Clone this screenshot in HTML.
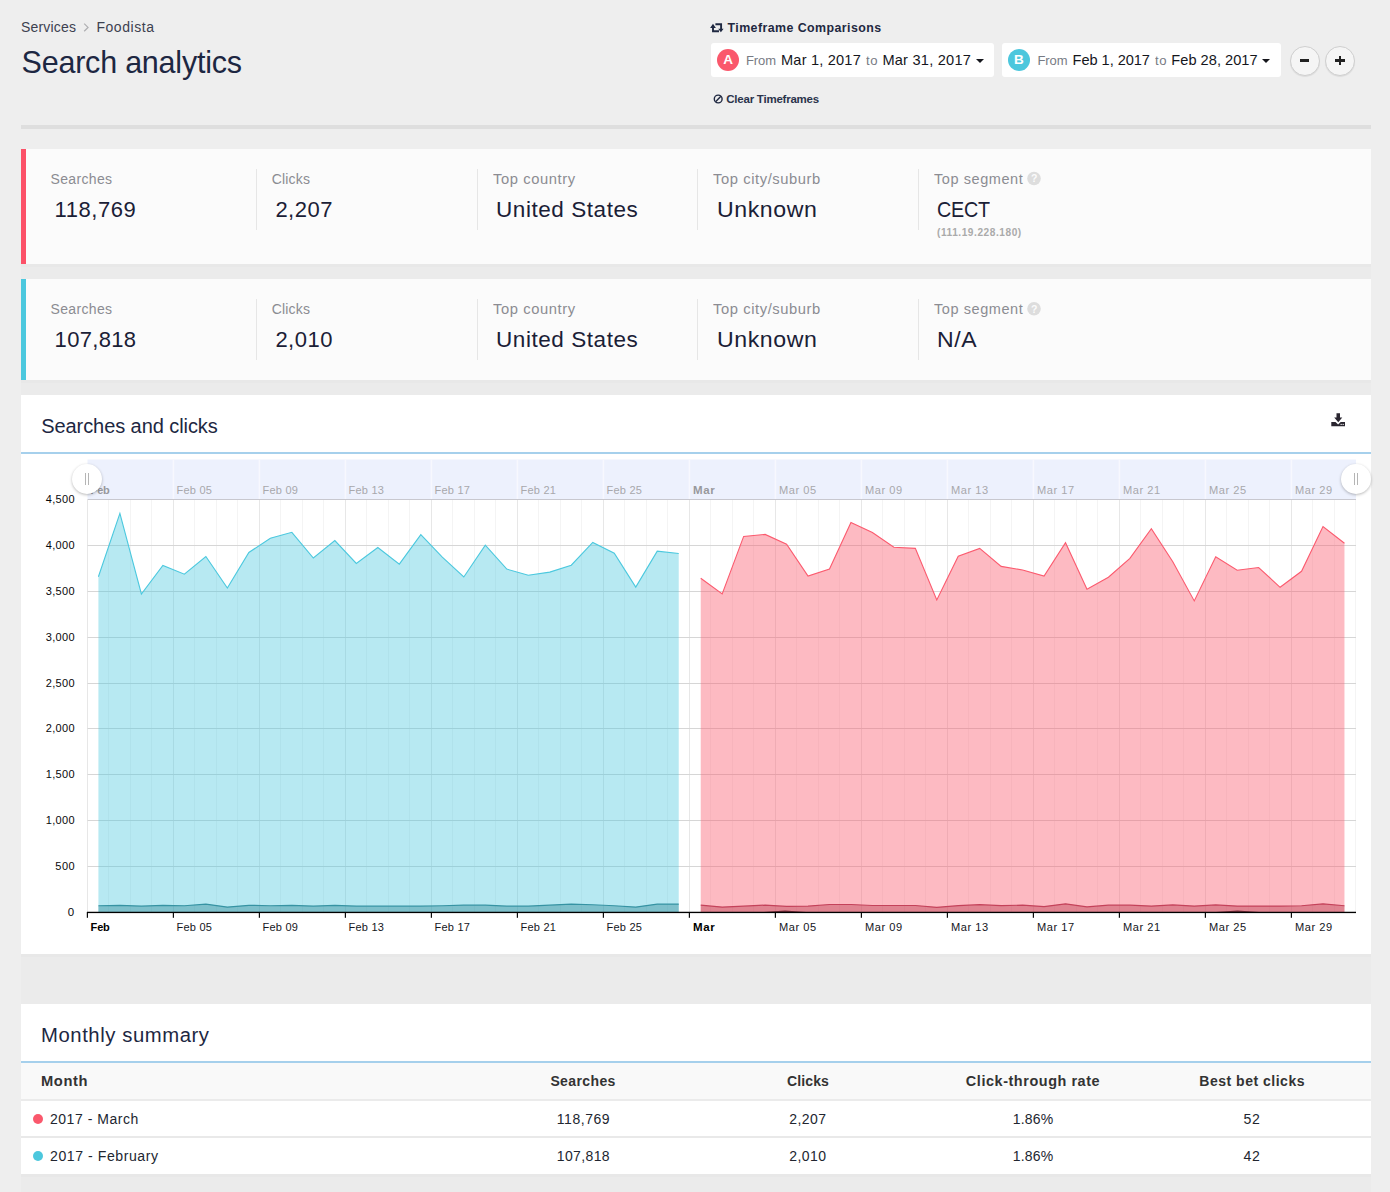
<!DOCTYPE html>
<html><head><meta charset="utf-8"><title>Search analytics</title>
<style>
html,body{margin:0;padding:0}
body{width:1390px;height:1192px;position:relative;overflow:hidden;background:#eeeeee;font-family:"Liberation Sans", sans-serif;}
.t{position:absolute;white-space:nowrap;line-height:1;}
.b{position:absolute;}
.card{position:absolute;background:#fff;}
</style></head>
<body>

<div class="b" style="left:21px;top:125px;width:1350px;height:4px;background:#dedede"></div>
<!-- timeframe buttons -->
<div class="b" style="left:711px;top:43px;width:283px;height:33.5px;background:#fff;border-radius:3px"></div>
<div class="b" style="left:1002px;top:43px;width:278.5px;height:33.5px;background:#fff;border-radius:3px"></div>
<div class="b" style="left:717px;top:49.2px;width:22px;height:22px;border-radius:50%;background:#fa586c"></div>
<div class="b" style="left:1007.8px;top:49px;width:22px;height:22px;border-radius:50%;background:#4cc7dd"></div>
<div class="b" style="left:975.6px;top:58.6px;width:0;height:0;border-left:4.2px solid transparent;border-right:4.2px solid transparent;border-top:4.4px solid #15161c"></div>
<div class="b" style="left:1262px;top:58.6px;width:0;height:0;border-left:4.2px solid transparent;border-right:4.2px solid transparent;border-top:4.4px solid #15161c"></div>
<div class="b" style="left:1289.5px;top:45.5px;width:28px;height:28px;border-radius:50%;background:#f5f5f5;border:1px solid #cfcfcf;box-shadow:0 1px 1px rgba(0,0,0,.08)"></div>
<div class="b" style="left:1325px;top:45.5px;width:28px;height:28px;border-radius:50%;background:#f5f5f5;border:1px solid #cfcfcf;box-shadow:0 1px 1px rgba(0,0,0,.08)"></div>
<div class="b" style="left:1300px;top:59.3px;width:9px;height:2.4px;background:#222"></div>
<div class="b" style="left:1335.4px;top:59.3px;width:9.4px;height:2.4px;background:#222"></div>
<div class="b" style="left:1338.9px;top:55.8px;width:2.4px;height:9.4px;background:#222"></div>
<!-- stat cards -->
<div class="b" style="left:21px;top:149px;width:1350px;height:1043px;background:rgba(0,0,0,0.012)"></div>
<div class="card" style="left:21px;top:149px;width:1350px;height:115px;background:#fbfbfb;box-shadow:0 3px 0 #e8e8e8"></div>
<div class="b" style="left:21px;top:149px;width:5px;height:115px;background:#fc5168"></div>
<div class="card" style="left:21px;top:279px;width:1350px;height:101px;background:#fbfbfb;box-shadow:0 3px 0 #e8e8e8"></div>
<div class="b" style="left:21px;top:279px;width:5px;height:101px;background:#4bc8de"></div>
<div class="b" style="left:256.0px;top:169px;width:1px;height:61px;background:#e6e6e6"></div>
<div class="b" style="left:477.0px;top:169px;width:1px;height:61px;background:#e6e6e6"></div>
<div class="b" style="left:697.0px;top:169px;width:1px;height:61px;background:#e6e6e6"></div>
<div class="b" style="left:918.0px;top:169px;width:1px;height:61px;background:#e6e6e6"></div>
<div class="b" style="left:256.0px;top:299px;width:1px;height:61px;background:#e6e6e6"></div>
<div class="b" style="left:477.0px;top:299px;width:1px;height:61px;background:#e6e6e6"></div>
<div class="b" style="left:697.0px;top:299px;width:1px;height:61px;background:#e6e6e6"></div>
<div class="b" style="left:918.0px;top:299px;width:1px;height:61px;background:#e6e6e6"></div>

<!-- chart card -->
<div class="card" style="left:21px;top:395px;width:1350px;height:559px;box-shadow:0 3px 0 #e8e8e8"></div>
<div class="b" style="left:21px;top:452px;width:1350px;height:2px;background:#a6d0ec"></div>
<!-- summary card -->
<div class="card" style="left:21px;top:1004px;width:1350px;height:170px;box-shadow:0 3px 0 #e8e8e8"></div>
<div class="b" style="left:21px;top:1061px;width:1350px;height:2px;background:#a6d0ec"></div>
<div class="b" style="left:21px;top:1063px;width:1350px;height:36.5px;background:#f9f9f9"></div>
<div class="b" style="left:21px;top:1099.2px;width:1350px;height:1.8px;background:#ebebeb"></div>
<div class="b" style="left:21px;top:1136.4px;width:1350px;height:1.8px;background:#e9e9e9"></div>
<div class="b" style="left:33.1px;top:1114.1px;width:10px;height:10px;border-radius:50%;background:#fa586c"></div>
<div class="b" style="left:33.1px;top:1151px;width:10px;height:10px;border-radius:50%;background:#4cc7dd"></div>


<svg class="b" style="left:0;top:0" width="1390" height="1192" viewBox="0 0 1390 1192">
<!-- breadcrumb chevron -->
<path d="M84.2,23.6 L88,27.4 L84.2,31.2" fill="none" stroke="#b0b0b3" stroke-width="1.3"/>
<!-- retweet icon -->
<g fill="none" stroke="#1f2841" stroke-width="1.9">
<path d="M713,27.3 V31.2 H719"/><path d="M715.4,24.3 H721.1 V29.2"/>
</g>
<path d="M710.1,27.9 h5.8 l-2.9,-4.2z M718.2,28.7 h5.4 l-2.7,3.6z" fill="#1f2841"/>
<!-- ban icon -->
<circle cx="718.2" cy="99" r="3.9" fill="none" stroke="#1f2841" stroke-width="1.4"/>
<path d="M715.6,101.8 L720.9,96.2" stroke="#1f2841" stroke-width="1.4"/>
<!-- question icons -->
<circle cx="1034" cy="178.5" r="6.8" fill="#dddddd"/>
<circle cx="1034" cy="308.7" r="6.8" fill="#dddddd"/>
<!-- download icon -->
<path d="M1336.5,413.2 h3.5 v4.3 h2.3 l-4.05,4.7 l-4.05,-4.7 h2.3z" fill="#2a2630"/>
<path d="M1331.3,421.9 h4.2 l2.6,2.5 l2.6,-2.5 h4.3 v4.3 h-13.7z" fill="#2a2630"/>
<rect x="1340.6" y="423.9" width="1.1" height="1.1" fill="#fff"/><rect x="1342.6" y="423.9" width="1.1" height="1.1" fill="#fff"/>
<rect x="87.5" y="459.5" width="1268.5" height="39.5" fill="#edf1fd"/>
<rect x="172.6" y="459.5" width="1.6" height="39.5" fill="#f7f8fe"/>
<rect x="258.6" y="459.5" width="1.6" height="39.5" fill="#f7f8fe"/>
<rect x="344.6" y="459.5" width="1.6" height="39.5" fill="#f7f8fe"/>
<rect x="430.6" y="459.5" width="1.6" height="39.5" fill="#f7f8fe"/>
<rect x="516.6" y="459.5" width="1.6" height="39.5" fill="#f7f8fe"/>
<rect x="602.6" y="459.5" width="1.6" height="39.5" fill="#f7f8fe"/>
<rect x="688.6" y="459.5" width="1.6" height="39.5" fill="#f7f8fe"/>
<rect x="774.6" y="459.5" width="1.6" height="39.5" fill="#f7f8fe"/>
<rect x="860.6" y="459.5" width="1.6" height="39.5" fill="#f7f8fe"/>
<rect x="946.6" y="459.5" width="1.6" height="39.5" fill="#f7f8fe"/>
<rect x="1032.6" y="459.5" width="1.6" height="39.5" fill="#f7f8fe"/>
<rect x="1118.6" y="459.5" width="1.6" height="39.5" fill="#f7f8fe"/>
<rect x="1204.6" y="459.5" width="1.6" height="39.5" fill="#f7f8fe"/>
<rect x="1290.6" y="459.5" width="1.6" height="39.5" fill="#f7f8fe"/>
<line x1="87.5" y1="500" x2="87.5" y2="912" stroke="#e7e7e7" stroke-width="1"/>
<line x1="108.5" y1="500" x2="108.5" y2="912" stroke="#f4f4f4" stroke-width="1"/>
<line x1="130.5" y1="500" x2="130.5" y2="912" stroke="#f4f4f4" stroke-width="1"/>
<line x1="151.5" y1="500" x2="151.5" y2="912" stroke="#f4f4f4" stroke-width="1"/>
<line x1="173.5" y1="500" x2="173.5" y2="912" stroke="#e7e7e7" stroke-width="1"/>
<line x1="194.5" y1="500" x2="194.5" y2="912" stroke="#f4f4f4" stroke-width="1"/>
<line x1="216.5" y1="500" x2="216.5" y2="912" stroke="#f4f4f4" stroke-width="1"/>
<line x1="237.5" y1="500" x2="237.5" y2="912" stroke="#f4f4f4" stroke-width="1"/>
<line x1="259.5" y1="500" x2="259.5" y2="912" stroke="#e7e7e7" stroke-width="1"/>
<line x1="280.5" y1="500" x2="280.5" y2="912" stroke="#f4f4f4" stroke-width="1"/>
<line x1="302.5" y1="500" x2="302.5" y2="912" stroke="#f4f4f4" stroke-width="1"/>
<line x1="323.5" y1="500" x2="323.5" y2="912" stroke="#f4f4f4" stroke-width="1"/>
<line x1="345.5" y1="500" x2="345.5" y2="912" stroke="#e7e7e7" stroke-width="1"/>
<line x1="366.5" y1="500" x2="366.5" y2="912" stroke="#f4f4f4" stroke-width="1"/>
<line x1="388.5" y1="500" x2="388.5" y2="912" stroke="#f4f4f4" stroke-width="1"/>
<line x1="409.5" y1="500" x2="409.5" y2="912" stroke="#f4f4f4" stroke-width="1"/>
<line x1="431.5" y1="500" x2="431.5" y2="912" stroke="#e7e7e7" stroke-width="1"/>
<line x1="452.5" y1="500" x2="452.5" y2="912" stroke="#f4f4f4" stroke-width="1"/>
<line x1="474.5" y1="500" x2="474.5" y2="912" stroke="#f4f4f4" stroke-width="1"/>
<line x1="495.5" y1="500" x2="495.5" y2="912" stroke="#f4f4f4" stroke-width="1"/>
<line x1="517.5" y1="500" x2="517.5" y2="912" stroke="#e7e7e7" stroke-width="1"/>
<line x1="538.5" y1="500" x2="538.5" y2="912" stroke="#f4f4f4" stroke-width="1"/>
<line x1="560.5" y1="500" x2="560.5" y2="912" stroke="#f4f4f4" stroke-width="1"/>
<line x1="581.5" y1="500" x2="581.5" y2="912" stroke="#f4f4f4" stroke-width="1"/>
<line x1="603.5" y1="500" x2="603.5" y2="912" stroke="#e7e7e7" stroke-width="1"/>
<line x1="624.5" y1="500" x2="624.5" y2="912" stroke="#f4f4f4" stroke-width="1"/>
<line x1="646.5" y1="500" x2="646.5" y2="912" stroke="#f4f4f4" stroke-width="1"/>
<line x1="667.5" y1="500" x2="667.5" y2="912" stroke="#f4f4f4" stroke-width="1"/>
<line x1="689.5" y1="500" x2="689.5" y2="912" stroke="#e7e7e7" stroke-width="1"/>
<line x1="710.5" y1="500" x2="710.5" y2="912" stroke="#f4f4f4" stroke-width="1"/>
<line x1="732.5" y1="500" x2="732.5" y2="912" stroke="#f4f4f4" stroke-width="1"/>
<line x1="753.5" y1="500" x2="753.5" y2="912" stroke="#f4f4f4" stroke-width="1"/>
<line x1="775.5" y1="500" x2="775.5" y2="912" stroke="#e7e7e7" stroke-width="1"/>
<line x1="796.5" y1="500" x2="796.5" y2="912" stroke="#f4f4f4" stroke-width="1"/>
<line x1="818.5" y1="500" x2="818.5" y2="912" stroke="#f4f4f4" stroke-width="1"/>
<line x1="839.5" y1="500" x2="839.5" y2="912" stroke="#f4f4f4" stroke-width="1"/>
<line x1="861.5" y1="500" x2="861.5" y2="912" stroke="#e7e7e7" stroke-width="1"/>
<line x1="882.5" y1="500" x2="882.5" y2="912" stroke="#f4f4f4" stroke-width="1"/>
<line x1="904.5" y1="500" x2="904.5" y2="912" stroke="#f4f4f4" stroke-width="1"/>
<line x1="925.5" y1="500" x2="925.5" y2="912" stroke="#f4f4f4" stroke-width="1"/>
<line x1="947.5" y1="500" x2="947.5" y2="912" stroke="#e7e7e7" stroke-width="1"/>
<line x1="968.5" y1="500" x2="968.5" y2="912" stroke="#f4f4f4" stroke-width="1"/>
<line x1="990.5" y1="500" x2="990.5" y2="912" stroke="#f4f4f4" stroke-width="1"/>
<line x1="1011.5" y1="500" x2="1011.5" y2="912" stroke="#f4f4f4" stroke-width="1"/>
<line x1="1033.5" y1="500" x2="1033.5" y2="912" stroke="#e7e7e7" stroke-width="1"/>
<line x1="1054.5" y1="500" x2="1054.5" y2="912" stroke="#f4f4f4" stroke-width="1"/>
<line x1="1076.5" y1="500" x2="1076.5" y2="912" stroke="#f4f4f4" stroke-width="1"/>
<line x1="1097.5" y1="500" x2="1097.5" y2="912" stroke="#f4f4f4" stroke-width="1"/>
<line x1="1119.5" y1="500" x2="1119.5" y2="912" stroke="#e7e7e7" stroke-width="1"/>
<line x1="1140.5" y1="500" x2="1140.5" y2="912" stroke="#f4f4f4" stroke-width="1"/>
<line x1="1162.5" y1="500" x2="1162.5" y2="912" stroke="#f4f4f4" stroke-width="1"/>
<line x1="1183.5" y1="500" x2="1183.5" y2="912" stroke="#f4f4f4" stroke-width="1"/>
<line x1="1205.5" y1="500" x2="1205.5" y2="912" stroke="#e7e7e7" stroke-width="1"/>
<line x1="1226.5" y1="500" x2="1226.5" y2="912" stroke="#f4f4f4" stroke-width="1"/>
<line x1="1248.5" y1="500" x2="1248.5" y2="912" stroke="#f4f4f4" stroke-width="1"/>
<line x1="1269.5" y1="500" x2="1269.5" y2="912" stroke="#f4f4f4" stroke-width="1"/>
<line x1="1291.5" y1="500" x2="1291.5" y2="912" stroke="#e7e7e7" stroke-width="1"/>
<line x1="1312.5" y1="500" x2="1312.5" y2="912" stroke="#f4f4f4" stroke-width="1"/>
<line x1="1334.5" y1="500" x2="1334.5" y2="912" stroke="#f4f4f4" stroke-width="1"/>
<line x1="1355.5" y1="500" x2="1355.5" y2="912" stroke="#f4f4f4" stroke-width="1"/>
<line x1="87.5" y1="866.50" x2="1356" y2="866.50" stroke="#d6d6d6" stroke-width="1"/>
<line x1="87.5" y1="820.50" x2="1356" y2="820.50" stroke="#d6d6d6" stroke-width="1"/>
<line x1="87.5" y1="774.50" x2="1356" y2="774.50" stroke="#d6d6d6" stroke-width="1"/>
<line x1="87.5" y1="728.50" x2="1356" y2="728.50" stroke="#d6d6d6" stroke-width="1"/>
<line x1="87.5" y1="683.50" x2="1356" y2="683.50" stroke="#d6d6d6" stroke-width="1"/>
<line x1="87.5" y1="637.50" x2="1356" y2="637.50" stroke="#d6d6d6" stroke-width="1"/>
<line x1="87.5" y1="591.50" x2="1356" y2="591.50" stroke="#d6d6d6" stroke-width="1"/>
<line x1="87.5" y1="545.50" x2="1356" y2="545.50" stroke="#d6d6d6" stroke-width="1"/>
<line x1="87.5" y1="499.50" x2="1356" y2="499.50" stroke="#c8c8cf" stroke-width="1"/>
<path d="M98.40,912.10 L98.40,576.70 L119.89,513.40 L141.39,594.00 L162.88,565.40 L184.38,574.20 L205.87,556.50 L227.36,588.00 L248.86,552.50 L270.35,538.30 L291.85,532.30 L313.34,558.00 L334.83,540.60 L356.33,563.40 L377.82,547.50 L399.32,564.10 L420.81,534.60 L442.30,557.20 L463.80,577.00 L485.29,545.20 L506.79,569.10 L528.28,575.30 L549.77,572.10 L571.27,565.20 L592.76,542.40 L614.26,553.20 L635.75,587.10 L657.24,551.20 L678.74,553.50 L678.74,912.10 Z" fill="#4bc8de" fill-opacity="0.4"/>
<path d="M98.40,576.70 L119.89,513.40 L141.39,594.00 L162.88,565.40 L184.38,574.20 L205.87,556.50 L227.36,588.00 L248.86,552.50 L270.35,538.30 L291.85,532.30 L313.34,558.00 L334.83,540.60 L356.33,563.40 L377.82,547.50 L399.32,564.10 L420.81,534.60 L442.30,557.20 L463.80,577.00 L485.29,545.20 L506.79,569.10 L528.28,575.30 L549.77,572.10 L571.27,565.20 L592.76,542.40 L614.26,553.20 L635.75,587.10 L657.24,551.20 L678.74,553.50" fill="none" stroke="#4bc8de" stroke-width="1.1"/>
<path d="M700.75,912.10 L700.75,578.30 L722.21,594.00 L743.66,536.40 L765.12,534.40 L786.58,544.30 L808.03,576.00 L829.49,569.10 L850.95,522.60 L872.41,532.50 L893.86,547.30 L915.32,548.40 L936.78,600.00 L958.23,556.20 L979.69,548.40 L1001.15,566.40 L1022.61,570.00 L1044.06,576.00 L1065.52,542.70 L1086.98,589.20 L1108.43,577.20 L1129.89,558.30 L1151.35,528.80 L1172.80,561.80 L1194.26,600.90 L1215.72,556.70 L1237.18,570.30 L1258.63,567.50 L1280.09,587.30 L1301.55,571.30 L1323.00,526.50 L1344.46,543.30 L1344.46,912.10 Z" fill="#fb5a6e" fill-opacity="0.42"/>
<path d="M700.75,578.30 L722.21,594.00 L743.66,536.40 L765.12,534.40 L786.58,544.30 L808.03,576.00 L829.49,569.10 L850.95,522.60 L872.41,532.50 L893.86,547.30 L915.32,548.40 L936.78,600.00 L958.23,556.20 L979.69,548.40 L1001.15,566.40 L1022.61,570.00 L1044.06,576.00 L1065.52,542.70 L1086.98,589.20 L1108.43,577.20 L1129.89,558.30 L1151.35,528.80 L1172.80,561.80 L1194.26,600.90 L1215.72,556.70 L1237.18,570.30 L1258.63,567.50 L1280.09,587.30 L1301.55,571.30 L1323.00,526.50 L1344.46,543.30" fill="none" stroke="#fb5a6e" stroke-width="1.1"/>
<path d="M98.40,912.10 L98.40,905.77 L119.89,905.32 L141.39,906.14 L162.88,905.32 L184.38,905.77 L205.87,904.12 L227.36,907.06 L248.86,905.32 L270.35,905.77 L291.85,905.32 L313.34,906.14 L334.83,905.32 L356.33,906.14 L377.82,906.14 L399.32,906.14 L420.81,906.14 L442.30,905.77 L463.80,905.13 L485.29,905.13 L506.79,906.14 L528.28,906.14 L549.77,905.13 L571.27,904.12 L592.76,904.77 L614.26,905.77 L635.75,907.06 L657.24,904.12 L678.74,904.12 L678.74,912.10 Z" fill="#2f8796" fill-opacity="0.42"/>
<path d="M98.40,905.77 L119.89,905.32 L141.39,906.14 L162.88,905.32 L184.38,905.77 L205.87,904.12 L227.36,907.06 L248.86,905.32 L270.35,905.77 L291.85,905.32 L313.34,906.14 L334.83,905.32 L356.33,906.14 L377.82,906.14 L399.32,906.14 L420.81,906.14 L442.30,905.77 L463.80,905.13 L485.29,905.13 L506.79,906.14 L528.28,906.14 L549.77,905.13 L571.27,904.12 L592.76,904.77 L614.26,905.77 L635.75,907.06 L657.24,904.12 L678.74,904.12" fill="none" stroke="#3693a3" stroke-width="1.2"/>
<path d="M700.75,912.10 L700.75,905.13 L722.21,907.06 L743.66,906.14 L765.12,905.13 L786.58,906.42 L808.03,906.14 L829.49,904.49 L850.95,904.49 L872.41,905.50 L893.86,905.50 L915.32,905.50 L936.78,907.33 L958.23,905.68 L979.69,904.68 L1001.15,905.68 L1022.61,905.13 L1044.06,906.60 L1065.52,903.85 L1086.98,906.88 L1108.43,905.13 L1129.89,905.13 L1151.35,906.05 L1172.80,904.95 L1194.26,906.05 L1215.72,904.95 L1237.18,906.05 L1258.63,906.05 L1280.09,906.05 L1301.55,905.77 L1323.00,903.85 L1344.46,905.77 L1344.46,912.10 Z" fill="#b8394e" fill-opacity="0.42"/>
<path d="M700.75,905.13 L722.21,907.06 L743.66,906.14 L765.12,905.13 L786.58,906.42 L808.03,906.14 L829.49,904.49 L850.95,904.49 L872.41,905.50 L893.86,905.50 L915.32,905.50 L936.78,907.33 L958.23,905.68 L979.69,904.68 L1001.15,905.68 L1022.61,905.13 L1044.06,906.60 L1065.52,903.85 L1086.98,906.88 L1108.43,905.13 L1129.89,905.13 L1151.35,906.05 L1172.80,904.95 L1194.26,906.05 L1215.72,904.95 L1237.18,906.05 L1258.63,906.05 L1280.09,906.05 L1301.55,905.77 L1323.00,903.85 L1344.46,905.77" fill="none" stroke="#c4425a" stroke-width="1.2"/>
<path d="M764,912 L785,910.6 L806,912 Z M1216,912 L1237.5,910.6 L1259,912 Z" fill="#5a1522" fill-opacity="0.8"/>
<rect x="87" y="911.75" width="1269" height="1.35" fill="#000"/>
<rect x="86.80" y="912" width="1.15" height="5.8" fill="#000"/>
<rect x="172.80" y="912" width="1.15" height="5.8" fill="#000"/>
<rect x="258.80" y="912" width="1.15" height="5.8" fill="#000"/>
<rect x="344.80" y="912" width="1.15" height="5.8" fill="#000"/>
<rect x="430.80" y="912" width="1.15" height="5.8" fill="#000"/>
<rect x="516.80" y="912" width="1.15" height="5.8" fill="#000"/>
<rect x="602.80" y="912" width="1.15" height="5.8" fill="#000"/>
<rect x="688.80" y="912" width="1.15" height="5.8" fill="#000"/>
<rect x="774.80" y="912" width="1.15" height="5.8" fill="#000"/>
<rect x="860.80" y="912" width="1.15" height="5.8" fill="#000"/>
<rect x="946.80" y="912" width="1.15" height="5.8" fill="#000"/>
<rect x="1032.80" y="912" width="1.15" height="5.8" fill="#000"/>
<rect x="1118.80" y="912" width="1.15" height="5.8" fill="#000"/>
<rect x="1204.80" y="912" width="1.15" height="5.8" fill="#000"/>
<rect x="1290.80" y="912" width="1.15" height="5.8" fill="#000"/>
</svg>
<span class="t" style="left:1030.9px;top:173.3px;font-size:10.5px;font-weight:700;color:#fbfbfb">?</span>
<span class="t" style="left:1030.9px;top:303.5px;font-size:10.5px;font-weight:700;color:#fbfbfb">?</span>
<!-- brush handles -->
<div class="b" style="left:72px;top:464px;width:30px;height:30px;border-radius:50%;background:#fff;box-shadow:0 1px 3px rgba(0,0,0,.28);z-index:5"></div>
<div class="b" style="left:84.7px;top:473px;width:1px;height:11.5px;background:#b5b5b5;z-index:6"></div>
<div class="b" style="left:88.3px;top:473px;width:1px;height:11.5px;background:#b5b5b5;z-index:6"></div>
<div class="b" style="left:1341px;top:464px;width:30px;height:30px;border-radius:50%;background:#fff;box-shadow:0 1px 3px rgba(0,0,0,.28);z-index:5"></div>
<div class="b" style="left:1353.7px;top:473px;width:1px;height:11.5px;background:#b5b5b5;z-index:6"></div>
<div class="b" style="left:1357.3px;top:473px;width:1px;height:11.5px;background:#b5b5b5;z-index:6"></div>

<span class="t" id="t0" style="top:20.05px;font-size:14px;color:#3d4150;letter-spacing:0.216px;left:20.90px;">Services</span>
<span class="t" id="t1" style="top:20.05px;font-size:14px;color:#3d4150;letter-spacing:0.550px;left:96.40px;">Foodista</span>
<span class="t" id="t2" style="top:46.88px;font-size:30.5px;color:#1d2742;letter-spacing:-0.225px;left:21.60px;">Search analytics</span>
<span class="t" id="t3" style="top:21.50px;font-size:12.4px;color:#1f2841;font-weight:700;letter-spacing:0.426px;left:727.50px;">Timeframe Comparisons</span>
<span class="t" id="t4" style="top:53.47px;font-size:13.5px;color:#ffffff;font-weight:700;left:528.00px;width:400px;text-align:center;">A</span>
<span class="t" id="t5" style="top:54.00px;font-size:13px;color:#777b84;letter-spacing:-0.115px;left:746.00px;">From</span>
<span class="t" id="t6" style="top:52.64px;font-size:14.6px;color:#15161c;letter-spacing:0.191px;left:781.00px;">Mar 1, 2017</span>
<span class="t" id="t7" style="top:54.00px;font-size:13px;color:#777b84;letter-spacing:0.550px;left:865.80px;transform:scaleX(1.0093);transform-origin:0 50%;">to</span>
<span class="t" id="t8" style="top:52.64px;font-size:14.6px;color:#15161c;letter-spacing:0.227px;left:882.40px;">Mar 31, 2017</span>
<span class="t" id="t9" style="top:53.37px;font-size:13.5px;color:#ffffff;font-weight:700;left:818.90px;width:400px;text-align:center;">B</span>
<span class="t" id="t10" style="top:54.00px;font-size:13px;color:#777b84;letter-spacing:-0.115px;left:1037.50px;">From</span>
<span class="t" id="t11" style="top:52.64px;font-size:14.6px;color:#15161c;letter-spacing:-0.051px;left:1072.60px;">Feb 1, 2017</span>
<span class="t" id="t12" style="top:54.00px;font-size:13px;color:#777b84;letter-spacing:0.550px;left:1155.20px;transform:scaleX(1.0093);transform-origin:0 50%;">to</span>
<span class="t" id="t13" style="top:52.64px;font-size:14.6px;color:#15161c;letter-spacing:0.026px;left:1171.30px;">Feb 28, 2017</span>
<span class="t" id="t14" style="top:93.77px;font-size:11.5px;color:#2a334b;font-weight:700;letter-spacing:-0.234px;left:726.30px;">Clear Timeframes</span>
<span class="t" id="t15" style="top:172.00px;font-size:14px;color:#8b8c92;letter-spacing:0.321px;left:50.60px;">Searches</span>
<span class="t" id="t16" style="top:198.98px;font-size:22px;color:#1a2036;letter-spacing:0.550px;left:54.60px;">118,769</span>
<span class="t" id="t17" style="top:172.00px;font-size:14px;color:#8b8c92;letter-spacing:0.191px;left:271.70px;">Clicks</span>
<span class="t" id="t18" style="top:198.98px;font-size:22px;color:#1a2036;letter-spacing:0.484px;left:275.40px;">2,207</span>
<span class="t" id="t19" style="top:172.00px;font-size:14px;color:#8b8c92;letter-spacing:0.550px;left:492.50px;transform:scaleX(1.0530);transform-origin:0 50%;">Top country</span>
<span class="t" id="t20" style="top:198.98px;font-size:22px;color:#1a2036;letter-spacing:0.550px;left:496.20px;transform:scaleX(1.0225);transform-origin:0 50%;">United States</span>
<span class="t" id="t21" style="top:172.00px;font-size:14px;color:#8b8c92;letter-spacing:0.550px;left:713.30px;transform:scaleX(1.0533);transform-origin:0 50%;">Top city/suburb</span>
<span class="t" id="t22" style="top:198.98px;font-size:22px;color:#1a2036;letter-spacing:0.550px;left:717.00px;transform:scaleX(1.0503);transform-origin:0 50%;">Unknown</span>
<span class="t" id="t23" style="top:172.00px;font-size:14px;color:#8b8c92;letter-spacing:0.550px;left:934.10px;transform:scaleX(1.0365);transform-origin:0 50%;">Top segment</span>
<span class="t" id="t24" style="top:198.98px;font-size:22px;color:#1a2036;letter-spacing:-0.250px;left:937.20px;transform:scaleX(0.8979);transform-origin:0 50%;">CECT</span>
<span class="t" id="t25" style="top:227.84px;font-size:10px;color:#aaaaaa;font-weight:700;letter-spacing:0.550px;left:936.90px;transform:scaleX(1.0105);transform-origin:0 50%;">(111.19.228.180)</span>
<span class="t" id="t26" style="top:302.05px;font-size:14px;color:#8b8c92;letter-spacing:0.321px;left:50.60px;">Searches</span>
<span class="t" id="t27" style="top:329.03px;font-size:22px;color:#1a2036;letter-spacing:0.311px;left:54.60px;">107,818</span>
<span class="t" id="t28" style="top:302.05px;font-size:14px;color:#8b8c92;letter-spacing:0.191px;left:271.70px;">Clicks</span>
<span class="t" id="t29" style="top:329.03px;font-size:22px;color:#1a2036;letter-spacing:0.484px;left:275.40px;">2,010</span>
<span class="t" id="t30" style="top:302.05px;font-size:14px;color:#8b8c92;letter-spacing:0.550px;left:492.50px;transform:scaleX(1.0530);transform-origin:0 50%;">Top country</span>
<span class="t" id="t31" style="top:329.03px;font-size:22px;color:#1a2036;letter-spacing:0.550px;left:496.20px;transform:scaleX(1.0225);transform-origin:0 50%;">United States</span>
<span class="t" id="t32" style="top:302.05px;font-size:14px;color:#8b8c92;letter-spacing:0.550px;left:713.30px;transform:scaleX(1.0533);transform-origin:0 50%;">Top city/suburb</span>
<span class="t" id="t33" style="top:329.03px;font-size:22px;color:#1a2036;letter-spacing:0.550px;left:717.00px;transform:scaleX(1.0503);transform-origin:0 50%;">Unknown</span>
<span class="t" id="t34" style="top:302.05px;font-size:14px;color:#8b8c92;letter-spacing:0.550px;left:934.10px;transform:scaleX(1.0365);transform-origin:0 50%;">Top segment</span>
<span class="t" id="t35" style="top:329.03px;font-size:22px;color:#1a2036;letter-spacing:0.550px;left:937.20px;transform:scaleX(1.0480);transform-origin:0 50%;">N/A</span>
<span class="t" id="t36" style="top:415.77px;font-size:20px;color:#1d2742;letter-spacing:-0.071px;left:41.20px;">Searches and clicks</span>
<span class="t" id="t37" style="top:484.59px;font-size:11px;color:#98989c;font-weight:700;letter-spacing:-0.181px;left:90.60px;">Feb</span>
<span class="t" id="t38" style="top:921.59px;font-size:11px;color:#000000;font-weight:700;letter-spacing:-0.181px;left:90.60px;">Feb</span>
<span class="t" id="t39" style="top:484.59px;font-size:11px;color:#a8a8ac;letter-spacing:0.210px;left:176.60px;">Feb 05</span>
<span class="t" id="t40" style="top:921.59px;font-size:11px;color:#15161c;letter-spacing:0.210px;left:176.60px;">Feb 05</span>
<span class="t" id="t41" style="top:484.59px;font-size:11px;color:#a8a8ac;letter-spacing:0.210px;left:262.60px;">Feb 09</span>
<span class="t" id="t42" style="top:921.59px;font-size:11px;color:#15161c;letter-spacing:0.210px;left:262.60px;">Feb 09</span>
<span class="t" id="t43" style="top:484.59px;font-size:11px;color:#a8a8ac;letter-spacing:0.210px;left:348.60px;">Feb 13</span>
<span class="t" id="t44" style="top:921.59px;font-size:11px;color:#15161c;letter-spacing:0.210px;left:348.60px;">Feb 13</span>
<span class="t" id="t45" style="top:484.59px;font-size:11px;color:#a8a8ac;letter-spacing:0.210px;left:434.60px;">Feb 17</span>
<span class="t" id="t46" style="top:921.59px;font-size:11px;color:#15161c;letter-spacing:0.210px;left:434.60px;">Feb 17</span>
<span class="t" id="t47" style="top:484.59px;font-size:11px;color:#a8a8ac;letter-spacing:0.210px;left:520.60px;">Feb 21</span>
<span class="t" id="t48" style="top:921.59px;font-size:11px;color:#15161c;letter-spacing:0.210px;left:520.60px;">Feb 21</span>
<span class="t" id="t49" style="top:484.59px;font-size:11px;color:#a8a8ac;letter-spacing:0.210px;left:606.60px;">Feb 25</span>
<span class="t" id="t50" style="top:921.59px;font-size:11px;color:#15161c;letter-spacing:0.210px;left:606.60px;">Feb 25</span>
<span class="t" id="t51" style="top:484.59px;font-size:11px;color:#98989c;font-weight:700;letter-spacing:0.550px;left:692.60px;transform:scaleX(1.0502);transform-origin:0 50%;">Mar</span>
<span class="t" id="t52" style="top:921.59px;font-size:11px;color:#000000;font-weight:700;letter-spacing:0.550px;left:692.60px;transform:scaleX(1.0502);transform-origin:0 50%;">Mar</span>
<span class="t" id="t53" style="top:484.59px;font-size:11px;color:#a8a8ac;letter-spacing:0.550px;left:778.60px;transform:scaleX(1.0054);transform-origin:0 50%;">Mar 05</span>
<span class="t" id="t54" style="top:921.59px;font-size:11px;color:#15161c;letter-spacing:0.550px;left:778.60px;transform:scaleX(1.0054);transform-origin:0 50%;">Mar 05</span>
<span class="t" id="t55" style="top:484.59px;font-size:11px;color:#a8a8ac;letter-spacing:0.550px;left:864.60px;transform:scaleX(1.0054);transform-origin:0 50%;">Mar 09</span>
<span class="t" id="t56" style="top:921.59px;font-size:11px;color:#15161c;letter-spacing:0.550px;left:864.60px;transform:scaleX(1.0054);transform-origin:0 50%;">Mar 09</span>
<span class="t" id="t57" style="top:484.59px;font-size:11px;color:#a8a8ac;letter-spacing:0.550px;left:950.60px;transform:scaleX(1.0054);transform-origin:0 50%;">Mar 13</span>
<span class="t" id="t58" style="top:921.59px;font-size:11px;color:#15161c;letter-spacing:0.550px;left:950.60px;transform:scaleX(1.0054);transform-origin:0 50%;">Mar 13</span>
<span class="t" id="t59" style="top:484.59px;font-size:11px;color:#a8a8ac;letter-spacing:0.550px;left:1036.60px;transform:scaleX(1.0054);transform-origin:0 50%;">Mar 17</span>
<span class="t" id="t60" style="top:921.59px;font-size:11px;color:#15161c;letter-spacing:0.550px;left:1036.60px;transform:scaleX(1.0054);transform-origin:0 50%;">Mar 17</span>
<span class="t" id="t61" style="top:484.59px;font-size:11px;color:#a8a8ac;letter-spacing:0.550px;left:1122.60px;transform:scaleX(1.0054);transform-origin:0 50%;">Mar 21</span>
<span class="t" id="t62" style="top:921.59px;font-size:11px;color:#15161c;letter-spacing:0.550px;left:1122.60px;transform:scaleX(1.0054);transform-origin:0 50%;">Mar 21</span>
<span class="t" id="t63" style="top:484.59px;font-size:11px;color:#a8a8ac;letter-spacing:0.550px;left:1208.60px;transform:scaleX(1.0054);transform-origin:0 50%;">Mar 25</span>
<span class="t" id="t64" style="top:921.59px;font-size:11px;color:#15161c;letter-spacing:0.550px;left:1208.60px;transform:scaleX(1.0054);transform-origin:0 50%;">Mar 25</span>
<span class="t" id="t65" style="top:484.59px;font-size:11px;color:#a8a8ac;letter-spacing:0.550px;left:1294.60px;transform:scaleX(1.0054);transform-origin:0 50%;">Mar 29</span>
<span class="t" id="t66" style="top:921.59px;font-size:11px;color:#15161c;letter-spacing:0.550px;left:1294.60px;transform:scaleX(1.0054);transform-origin:0 50%;">Mar 29</span>
<span class="t" id="t67" style="top:906.59px;font-size:11px;color:#08080c;letter-spacing:0.275px;right:1315.12px;transform:scaleX(1.0449);transform-origin:100% 50%;">0</span>
<span class="t" id="t68" style="top:860.69px;font-size:11px;color:#08080c;letter-spacing:0.470px;right:1314.93px;">500</span>
<span class="t" id="t69" style="top:814.69px;font-size:11px;color:#08080c;letter-spacing:0.317px;right:1315.08px;">1,000</span>
<span class="t" id="t70" style="top:768.69px;font-size:11px;color:#08080c;letter-spacing:0.317px;right:1315.08px;">1,500</span>
<span class="t" id="t71" style="top:722.69px;font-size:11px;color:#08080c;letter-spacing:0.317px;right:1315.08px;">2,000</span>
<span class="t" id="t72" style="top:677.69px;font-size:11px;color:#08080c;letter-spacing:0.317px;right:1315.08px;">2,500</span>
<span class="t" id="t73" style="top:631.69px;font-size:11px;color:#08080c;letter-spacing:0.317px;right:1315.08px;">3,000</span>
<span class="t" id="t74" style="top:585.69px;font-size:11px;color:#08080c;letter-spacing:0.317px;right:1315.08px;">3,500</span>
<span class="t" id="t75" style="top:539.69px;font-size:11px;color:#08080c;letter-spacing:0.317px;right:1315.08px;">4,000</span>
<span class="t" id="t76" style="top:493.69px;font-size:11px;color:#08080c;letter-spacing:0.317px;right:1315.08px;">4,500</span>
<span class="t" id="t77" style="top:1025.07px;font-size:20px;color:#1d2742;letter-spacing:0.550px;left:41.10px;transform:scaleX(1.0150);transform-origin:0 50%;">Monthly summary</span>
<span class="t" id="t78" style="top:1073.95px;font-size:14px;color:#333333;font-weight:700;letter-spacing:0.550px;left:41.30px;transform:scaleX(1.0501);transform-origin:0 50%;">Month</span>
<span class="t" id="t79" style="top:1073.95px;font-size:14px;color:#333333;font-weight:700;letter-spacing:0.388px;left:383.09px;width:400px;text-align:center;">Searches</span>
<span class="t" id="t80" style="top:1073.95px;font-size:14px;color:#333333;font-weight:700;letter-spacing:0.150px;left:607.98px;width:400px;text-align:center;">Clicks</span>
<span class="t" id="t81" style="top:1073.95px;font-size:14px;color:#333333;font-weight:700;letter-spacing:0.550px;left:832.98px;width:400px;text-align:center;transform:scaleX(1.0290);transform-origin:50% 50%;">Click-through rate</span>
<span class="t" id="t82" style="top:1073.95px;font-size:14px;color:#333333;font-weight:700;letter-spacing:0.510px;left:1052.16px;width:400px;text-align:center;">Best bet clicks</span>
<span class="t" id="t83" style="top:1111.95px;font-size:14px;color:#222630;letter-spacing:0.547px;left:49.90px;">2017 - March</span>
<span class="t" id="t84" style="top:1111.95px;font-size:14px;color:#222630;letter-spacing:0.550px;left:383.48px;width:400px;text-align:center;">118,769</span>
<span class="t" id="t85" style="top:1111.95px;font-size:14px;color:#222630;letter-spacing:0.438px;left:607.82px;width:400px;text-align:center;">2,207</span>
<span class="t" id="t86" style="top:1111.95px;font-size:14px;color:#222630;letter-spacing:0.199px;left:833.10px;width:400px;text-align:center;">1.86%</span>
<span class="t" id="t87" style="top:1111.95px;font-size:14px;color:#222630;letter-spacing:0.550px;left:1052.08px;width:400px;text-align:center;transform:scaleX(1.0045);transform-origin:50% 50%;">52</span>
<span class="t" id="t88" style="top:1149.15px;font-size:14px;color:#222630;letter-spacing:0.550px;left:49.90px;transform:scaleX(1.0064);transform-origin:0 50%;">2017 - February</span>
<span class="t" id="t89" style="top:1149.15px;font-size:14px;color:#222630;letter-spacing:0.382px;left:383.39px;width:400px;text-align:center;">107,818</span>
<span class="t" id="t90" style="top:1149.15px;font-size:14px;color:#222630;letter-spacing:0.438px;left:607.82px;width:400px;text-align:center;">2,010</span>
<span class="t" id="t91" style="top:1149.15px;font-size:14px;color:#222630;letter-spacing:0.199px;left:833.10px;width:400px;text-align:center;">1.86%</span>
<span class="t" id="t92" style="top:1149.15px;font-size:14px;color:#222630;letter-spacing:0.550px;left:1052.08px;width:400px;text-align:center;transform:scaleX(1.0045);transform-origin:50% 50%;">42</span>
</body></html>
